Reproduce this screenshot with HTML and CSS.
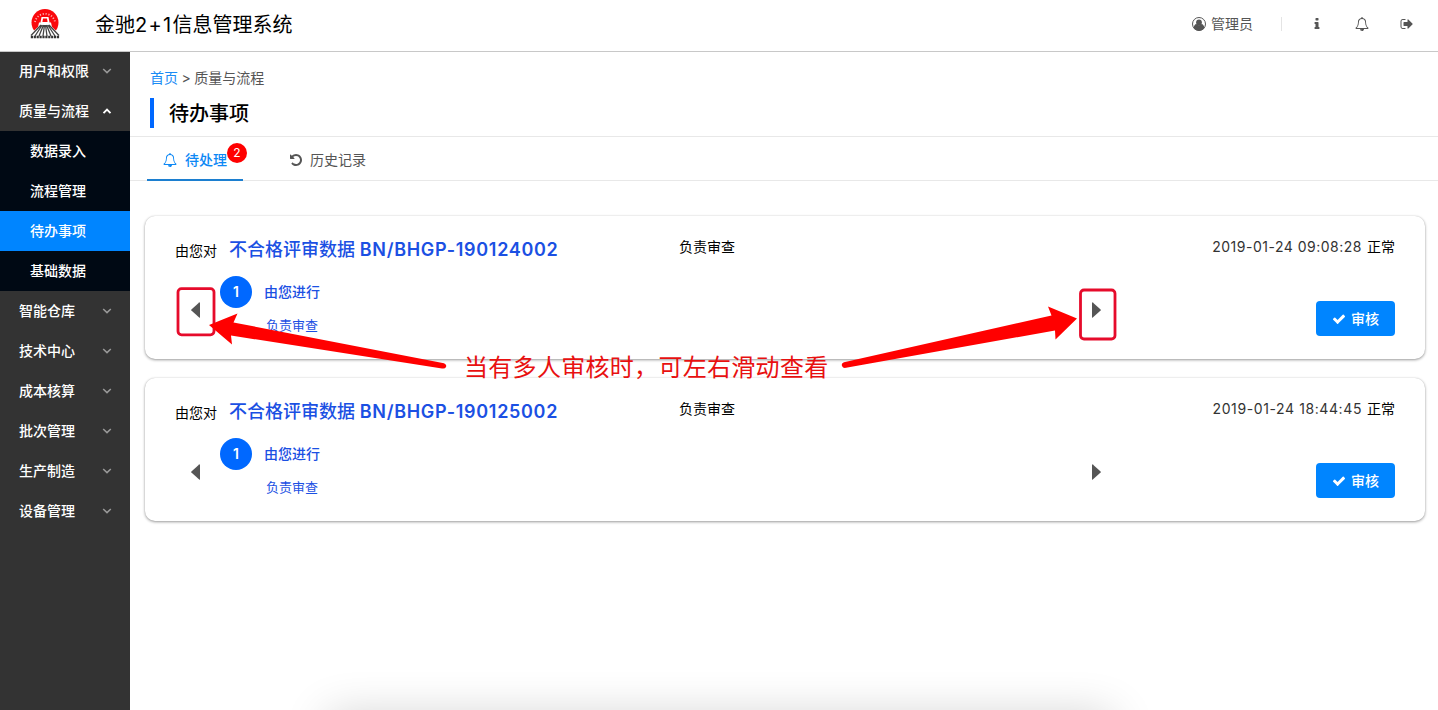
FILE: index.html
```html
<!DOCTYPE html>
<html lang="zh-CN">
<head>
<meta charset="utf-8">
<title>金驰2+1信息管理系统</title>
<link rel="stylesheet" href="styles.css">
</head>
<body>
<svg class="defs" width="0" height="0">
  <symbol id="bell" viewBox="0 0 1792 1792"><path d="M912 1696q0-16-16-16-59 0-101.500-42.500t-42.500-101.500q0-16-16-16t-16 16q0 73 51.500 124.500t124.500 51.500q16 0 16-16zm-666-288h1300q-266-300-266-832 0-51-24-105t-69-103-121.500-80.500-169.500-31.500-169.500 31.500-121.500 80.500-69 103-24 105q0 532-266 832zm1482 0q0 52-38 90t-90 38h-448q0 106-75 181t-181 75-181-75-75-181h-448q-52 0-90-38t-38-90q50-42 91-88t85-119.500 74.500-158.500 50-206 19.500-260q0-152 117-282.500t307-158.500q-8-19-8-39 0-40 28-68t68-28 68 28 28 68q0 20-8 39 190 28 307 158.500t117 282.500q0 139 19.500 260t50 206 74.500 158.500 85 119.500 91 88z"/></symbol>
  <symbol id="info" viewBox="0 0 1792 1792"><path d="M1216 1344v128q0 26-19 45t-45 19h-512q-26 0-45-19t-19-45v-128q0-26 19-45t45-19h64v-384h-64q-26 0-45-19t-19-45v-128q0-26 19-45t45-19h384q26 0 45 19t19 45v576h64q26 0 45 19t19 45zm-128-1152v192q0 26-19 45t-45 19h-256q-26 0-45-19t-19-45v-192q0-26 19-45t45-19h256q26 0 45 19t19 45z"/></symbol>
  <symbol id="signout" viewBox="0 0 1792 1792"><path d="M704 1440q0 4 1 20t.5 26.500-3 23.500-10 19.500-20.500 6.500h-320q-119 0-203.500-84.500t-84.500-203.500v-704q0-119 84.500-203.500t203.500-84.500h320q13 0 22.500 9.500t9.500 22.500q0 4 1 20t.5 26.500-3 23.500-10 19.500-20.500 6.500h-320q-66 0-113 47t-47 113v704q0 66 47 113t113 47h312l11.500 1 11.500 3 8 5.500 7 9 2 13.500zm928-544q0 26-19 45l-544 544q-19 19-45 19t-45-19-19-45v-288h-448q-26 0-45-19t-19-45v-384q0-26 19-45t45-19h448v-288q0-26 19-45t45-19 45 19l544 544q19 19 19 45z"/></symbol>
  <symbol id="undo" viewBox="0 0 1792 1792"><path d="M1664 896q0 156-61 298t-164 245-245 164-298 61q-172 0-327-72.500t-264-204.500q-7-10-6.500-22.500t8.500-20.500l137-138q10-9 25-9 16 2 23 12 73 95 179 147t225 52q104 0 198.500-40.500t163.500-109.500 109.500-163.500 40.500-198.500-40.500-198.500-109.500-163.500-163.500-109.500-198.500-40.500q-98 0-188 35.500t-160 101.500l137 138q31 30 14 69-17 40-59 40h-448q-26 0-45-19t-19-45v-448q0-42 40-59 39-17 69 14l130 129q107-101 244.500-156.500t284.500-55.500q156 0 298 61t245 164 164 245 61 298z"/></symbol>
  <symbol id="check" viewBox="0 0 1792 1792"><path d="M1671 566q0 40-28 68l-724 724-136 136q-28 28-68 28t-68-28l-136-136-362-362q-28-28-28-68t28-68l136-136q28-28 68-28t68 28l294 295 656-657q28-28 68-28t68 28l136 136q28 28 28 68z"/></symbol>
  <symbol id="user" viewBox="0 0 14 14"><circle cx="7" cy="7" r="6.500" fill="none" stroke="currentColor"/><circle cx="7" cy="5.400" r="2.900"/><path d="M1.600 11c.3-2.400 1.400-3.700 2.800-3.900a3.500 3.500 0 0 0 5.200 0c1.400.2 2.500 1.500 2.800 3.900a6.500 6.500 0 0 1-10.800 0z"/></symbol>
  <symbol id="down" viewBox="0 0 10 6"><path d="M1.200 1l3.800 3.600L8.800 1" fill="none" stroke="currentColor" stroke-width="1.500"/></symbol>
  <symbol id="up" viewBox="0 0 10 6"><path d="M1.500 5.200L5 1.700l3.500 3.500" fill="none" stroke="currentColor" stroke-width="1.900"/></symbol>
  <symbol id="prev" viewBox="0 0 9 16"><path d="M9 .8v14.400q0 .8-.8.3L.4 8.500Q0 8 .4 7.500L8.200.5Q9 0 9 .8z"/></symbol>
  <symbol id="next" viewBox="0 0 9 16"><path d="M0 .8v14.400q0 .8.800.3l7.800-7Q9 8 8.600 7.500L.8.500Q0 0 0 .8z"/></symbol>
</svg>

<header class="header">
  <svg class="logo" viewBox="0 0 30 32">
    <circle cx="15" cy="14.500" r="13.500" fill="#fa080c"/>
    <path d="M5 14a10.200 10.200 0 0 1 20 0" fill="none" stroke="#fff" stroke-width="1.800" stroke-dasharray="1.100 1.800" opacity=".7"/>
    <path d="M11.500 9h7l1 5.500h1.500l1 4.500h-14l1-4.500h1.500z" fill="#fff"/>
    <path d="M13 10.500h4l.6 3.500h-5.200z" fill="#fa080c"/>
    <path d="M10.500 16.500h9L30 26.500v4H0v-4z" fill="#fff"/>
    <path d="M11 17L1 27.500M12.200 17L5 28M13.500 17L9 28M14.500 17L13 28M15.500 17L17 28M16.500 17L21 28M17.800 17L25 28M19 17L29 27.500" stroke="#444" stroke-width="1.300"/>
    <path d="M.8 29h28.400" stroke="#333" stroke-width="2.600" stroke-dasharray="2.200 .7"/>
  </svg>
  <h1 class="brand">金驰<span class="wide">2+1</span>信息管理系统</h1>
  <div class="tools">
    <span class="user"><svg class="icon"><use href="#user"/></svg>管理员</span>
    <i class="divider"></i>
    <svg class="icon tool"><use href="#info"/></svg>
    <svg class="icon tool"><use href="#bell"/></svg>
    <svg class="icon tool"><use href="#signout"/></svg>
  </div>
</header>

<div class="layout">
  <nav class="sidebar">
    <a class="item">用户和权限<svg class="chev"><use href="#down"/></svg></a>
    <a class="item open">质量与流程<svg class="chev"><use href="#up"/></svg></a>
    <div class="submenu">
      <a class="sub">数据录入</a>
      <a class="sub">流程管理</a>
      <a class="sub current">待办事项</a>
      <a class="sub">基础数据</a>
    </div>
    <a class="item">智能仓库<svg class="chev"><use href="#down"/></svg></a>
    <a class="item">技术中心<svg class="chev"><use href="#down"/></svg></a>
    <a class="item">成本核算<svg class="chev"><use href="#down"/></svg></a>
    <a class="item">批次管理<svg class="chev"><use href="#down"/></svg></a>
    <a class="item">生产制造<svg class="chev"><use href="#down"/></svg></a>
    <a class="item">设备管理<svg class="chev"><use href="#down"/></svg></a>
  </nav>

  <main class="main">
    <div class="crumbs"><a>首页</a> &gt; 质量与流程</div>
    <h2 class="title">待办事项</h2>
    <div class="tabs">
      <a class="tab active"><svg class="icon"><use href="#bell"/></svg>待处理<b class="badge">2</b></a>
      <a class="tab"><svg class="icon"><use href="#undo"/></svg>历史记录</a>
    </div>

    <div class="cards">
      <section class="card">
        <div class="head">
          <span class="by">由您对</span><strong class="subject">不合格评审数据 <span class="code">BN/BHGP-190124002</span></strong>
          <span class="duty">负责审查</span>
          <span class="when"><time>2019-01-24 09:08:28</time>正常</span>
        </div>
        <div class="body">
          <svg class="arrow"><use href="#prev"/></svg>
          <div class="step"><b class="num">1</b><div class="who"><span class="name">由您进行</span><span class="role">负责审查</span></div></div>
          <svg class="arrow"><use href="#next"/></svg>
          <button class="btn"><svg class="icon"><use href="#check"/></svg>审核</button>
        </div>
      </section>
      <section class="card">
        <div class="head">
          <span class="by">由您对</span><strong class="subject">不合格评审数据 <span class="code">BN/BHGP-190125002</span></strong>
          <span class="duty">负责审查</span>
          <span class="when"><time>2019-01-24 18:44:45</time>正常</span>
        </div>
        <div class="body">
          <svg class="arrow"><use href="#prev"/></svg>
          <div class="step"><b class="num">1</b><div class="who"><span class="name">由您进行</span><span class="role">负责审查</span></div></div>
          <svg class="arrow"><use href="#next"/></svg>
          <button class="btn"><svg class="icon"><use href="#check"/></svg>审核</button>
        </div>
      </section>
    </div>
  </main>
</div>

<svg class="marks" viewBox="0 0 1438 710">
  <g fill="none" stroke="#e60b2b" stroke-width="2.800">
    <rect x="178" y="288.600" width="36" height="46.200" rx="3.500"/>
    <rect x="1080.500" y="290" width="34.500" height="49" rx="3.500"/>
  </g>
  <g fill="#f00">
    <path d="M209 325L237.500 313.500L233.500 322.500L444 363.200Q447 364.500 446 367Q445 369 442 368.400L231 335.500L232 344.500z"/>
    <path d="M1077 318.500L1048 306.500L1051.500 315.500L844 362.300Q841 363.500 842 366Q843 368.500 846 367.800L1055 330.500L1055.500 339.500z"/>
  </g>
</svg>
<p class="note">当有多人审核时，可左右滑动查看</p>
<div class="dock"></div>
</body>
</html>
```

FILE: styles.css
```css
* { box-sizing: border-box; }
html { overflow: hidden; }
body {
  margin: 0;
  width: 1438px;
  height: 710px;
  position: relative;
  overflow: hidden;
  background: #fff;
  color: #000;
  font: 14px/20px Inter, "Noto Sans CJK SC", sans-serif;
}
h1, h2, p { margin: 0; }
.defs { position: absolute; }
svg { fill: currentColor; flex: none; }
.icon { width: 14px; height: 14px; }

.header {
  position: relative;
  z-index: 1;
  display: flex;
  align-items: center;
  height: 52px;
  margin-bottom: -1px;
  padding: 0 24px 4px 30px;
  border-bottom: 1px solid #c8c8c8;
  background: #fff;
}
.logo { width: 30px; height: 32px; }
.brand { margin: 2px 0 0 35px; font-size: 20px; line-height: 28px; font-weight: 400; }
.wide { letter-spacing: 1.3px; }
.tools { display: flex; align-items: center; margin-left: auto; color: #555; }
.user { display: flex; align-items: center; gap: 5px; }
.divider { width: 1px; height: 14px; margin: 0 28px 0 28px; background: #e4e4e4; }
.tool + .tool { margin-left: 31px; }

.layout { display: flex; height: 659px; }
.sidebar { width: 130px; flex: none; background: #333; color: #fff; font-weight: 500; }
.item { display: flex; align-items: center; justify-content: space-between; height: 40px; padding: 0 18px 0 19px; }
.chev { width: 10px; height: 6px; color: #9a9a9a; }
.open .chev { color: #fff; }
.submenu { background: #000914; }
.sub { display: block; height: 40px; padding-left: 30px; line-height: 40px; }
.current { background: #0085ff; }

.main { flex: 1; padding-top: 17px; }
.crumbs { padding-left: 20px; color: #555; word-spacing: -.5px; }
.crumbs a { color: #1a8cf5; }
.title {
  height: 30px;
  margin: 10px 0 8px 20px;
  padding-left: 15px;
  border-left: 4px solid #0068ff;
  font-size: 20px;
  line-height: 32px;
  font-weight: 500;
}
.tabs { display: flex; gap: 31px; height: 45px; padding-left: 17px; border: 1px solid #e8e8e8; border-width: 1px 0; }
.tab { position: relative; display: flex; align-items: center; height: 44px; padding: 2px 16px 0 15px; color: #555; }
.tab .icon { margin-right: 7px; }
.active { border-bottom: 2px solid #1c7fd0; color: #0d88f5; font-weight: 500; }
.tab.active { padding: 4px 16px 0; }
.tab.active .icon { margin-right: 8px; }
.badge {
  position: absolute;
  left: 80px;
  top: 6px;
  width: 20px;
  height: 20px;
  border-radius: 50%;
  background: #f00;
  color: #fff;
  font-size: 12px;
  font-weight: 400;
  text-align: center;
}

.cards { display: flex; flex-direction: column; gap: 19px; padding: 35px 13px 0 15px; }
.card {
  height: 143px;
  padding: 20px 30px 0 30px;
  border-radius: 10px;
  background: #fff;
  box-shadow: 0 1px 3px rgba(0, 0, 0, .4), 0 0 1px rgba(0, 0, 0, .15);
}
.head { display: grid; grid-template-columns: 54px 450px 1fr auto; height: 28px; align-items: start; }
.by { padding-top: 5px; }
.subject { color: #1b50e3; font-size: 18px; line-height: 28px; font-weight: 500; }
.code { font-weight: 600; letter-spacing: .68px; }
.duty, .when { padding-top: 1px; }
.when { display: flex; gap: 5px; }
.when time { color: #333; letter-spacing: .5px; white-space: nowrap; }
.card + .card time { letter-spacing: .6px; }
.body { display: flex; align-items: flex-start; padding: 12px 0 0 16px; }
.arrow { width: 9px; height: 16px; margin-top: 26px; color: #555; }
.step { display: flex; width: 872px; margin: 0 0 0 20px; }
.num {
  width: 32px;
  height: 32px;
  border-radius: 50%;
  background: #0068ff;
  color: #fff;
  line-height: 32px;
  font-weight: 600;
  text-align: center;
}
.who { display: flex; flex-direction: column; margin-left: 12px; padding-top: 6px; color: #1b50e3; }
.name { font-weight: 500; }
.role { margin: 13px 0 0 2px; font-size: 13px; }
.btn {
  display: flex;
  align-items: center;
  justify-content: center;
  gap: 5px;
  width: 79px;
  height: 35px;
  margin: 25px 0 0 auto;
  padding: 0;
  border: 0;
  border-radius: 4px;
  background: #0085ff;
  color: #fff;
  font: inherit;
  font-weight: 500;
}

/* Annotation layer over the page */
.marks { position: absolute; z-index: 2; left: 0; top: 0; width: 1438px; height: 710px; }
.note {
  position: absolute;
  z-index: 2;
  left: 464px;
  top: 350px;
  color: #e81010;
  font-size: 24px;
  line-height: 36px;
  letter-spacing: .3px;
  white-space: nowrap;
}

/* Soft shadow rising from the bottom edge */
.dock {
  position: absolute;
  left: 260px;
  bottom: 0;
  width: 920px;
  height: 70px;
  overflow: hidden;
}
.dock::before {
  content: "";
  position: absolute;
  left: 68px;
  right: 68px;
  top: 70px;
  height: 40px;
  box-shadow: 0 5px 45px rgba(0, 0, 0, .19);
}
```
